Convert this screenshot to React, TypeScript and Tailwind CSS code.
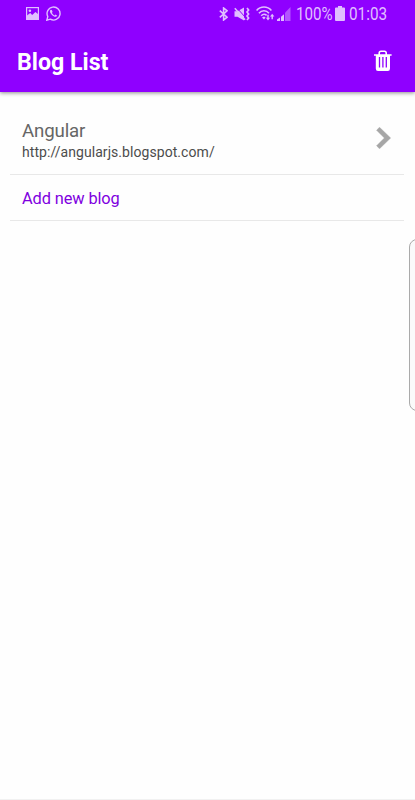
import { ReactNode } from "react";

type Blog = { title: string; url: string };

const blogs: Blog[] = [
  { title: "Angular", url: "http://angularjs.blogspot.com/" },
];

export default function App() {
  return (
    <div className="relative flex h-[800px] w-full flex-col overflow-hidden border-b border-[#f1f1f1] bg-[#fefefe] font-[Roboto,sans-serif]">
      <header className="h-[92px] shrink-0 bg-[#8f00ff] shadow-[0_1px_4px_rgba(0,0,0,0.45)]">
        <StatusBar />
        <div className="flex h-[66px] items-center justify-between pt-[3px] pr-[22px] pl-[17px]">
          <h1 className="pt-0.5 text-[23.2px] leading-7 font-bold text-white">
            Blog List
          </h1>
          <button aria-label="Delete">
            <TrashIcon />
          </button>
        </div>
      </header>
      <ul className="mt-[14px] mr-[11px] ml-[10px]">
        {blogs.map((blog) => (
          <Row key={blog.url}>
            <BlogPreview blog={blog} />
          </Row>
        ))}
        <Row>
          <button className="block h-[45px] pt-[3px] text-[16.4px] tracking-[-0.12px] text-[#7f00e0]">
            Add new blog
          </button>
        </Row>
      </ul>
      <div className="absolute top-[239px] left-[409px] h-[172px] w-5 rounded-lg border border-[#aaaaaa] bg-[#fafafa]" />
    </div>
  );
}

function Row({ children }: { children: ReactNode }) {
  return <li className="border-b border-[#e8e8e8] pl-3">{children}</li>;
}

function BlogPreview({ blog }: { blog: Blog }) {
  return (
    <div className="flex h-[68px] justify-between pr-3">
      <div className="pt-[13px]">
        <h2 className="text-[18.7px] leading-6 tracking-[-0.15px] text-[#666666]">
          {blog.title}
        </h2>
        <p className="-mt-px text-[14px] leading-5 tracking-[0.06px] text-[#4c4c4c]">
          {blog.url}
        </p>
      </div>
      <svg className="mt-[21px]" width="16" height="22" viewBox="0 0 16 22">
        <path
          d="M3.5 0.3 14.6 11 3.5 21.7 0.6 18.8 8.4 11 0.6 3.2Z"
          fill="#a6a6a6"
          stroke="#a6a6a6"
          strokeWidth="0.5"
          strokeLinejoin="round"
        />
      </svg>
    </div>
  );
}

function StatusBar() {
  return (
    <div className="flex h-[26px] items-center pt-px pl-[26px] text-[17.6px] text-[#e0bfff]">
      {/* picture */}
      <svg width="13" height="13" viewBox="0 0 13 13" fill="none">
        <rect x="0.6" y="0.6" width="11.8" height="11.8" stroke="currentColor" strokeWidth="1.2" />
        <path d="M1 8.5 4.2 6 6.2 8 9.4 5 12 7V12H1Z" fill="currentColor" />
        <circle cx="3.9" cy="3.8" r="1.3" fill="currentColor" />
      </svg>
      {/* whatsapp */}
      <svg className="ml-[7px]" width="15" height="15" viewBox="0 0 15 15" fill="none">
        <path
          d="M0.8 14.2 1.8 10.6A6.5 6.5 0 1 1 4.3 13.2Z"
          stroke="currentColor"
          strokeWidth="1.4"
        />
        <path
          d="M4.8 3.8C3.1 5 4.2 7.2 6 9S10 11.6 11.2 9.8L9.5 8.5 8.5 9.4C7.5 9 6.3 7.8 5.9 6.8L6.6 5.9 5.8 3.9Z"
          fill="currentColor"
        />
      </svg>
      {/* bluetooth */}
      <svg className="ml-[158px]" width="9" height="14" viewBox="0 0 9 14" fill="none">
        <path
          d="M0.8 3.7 8 10.2 4.6 13V1L8 3.8 0.8 10.3"
          stroke="currentColor"
          strokeWidth="1.6"
        />
      </svg>
      {/* sound off, vibrating */}
      <svg className="ml-[6px]" width="16" height="14" viewBox="0 0 16 14" fill="none">
        <path d="M0.5 4.3H3.5L10 0.5V13.5L3.5 9.7H0.5Z" fill="currentColor" />
        <path d="M2.6 0.6 11.5 10.5" stroke="#8f00ff" strokeWidth="1" />
        <path d="M0.8 1.3 11 12.7" stroke="currentColor" strokeWidth="1.6" />
        <path
          d="M13 1 14.6 3 13 5 14.6 7 13 9 14.6 11 13 13"
          stroke="currentColor"
          strokeWidth="1.7"
        />
      </svg>
      {/* wifi */}
      <svg className="ml-[6px]" width="19" height="15" viewBox="0 0 19 15" fill="none">
        <path
          d="M0.6 4.5C4.6-0.1 11.4-0.1 15.4 4.5M2.9 7.2C5.8 4 10.2 4 13 7.2M5.2 9.7C7 7.9 9 7.9 10.6 9.4"
          stroke="currentColor"
          strokeWidth="1.6"
        />
        <path d="M6 11.4 8 10.6 9.6 11.4 8 13.6Z" fill="currentColor" />
        <path
          d="M9.9 11.7H14.1L12 14.6ZM14 10.6 16.2 7.7 18.4 10.6Z"
          fill="currentColor"
        />
        <path d="M12 8.7V12M16.2 10V13.3" stroke="currentColor" strokeWidth="1.4" />
      </svg>
      {/* signal */}
      <svg className="ml-[2px]" width="14" height="14" viewBox="0 0 14 14" fill="currentColor">
        <path d="M0 14V12.5L3 10.5V14ZM4 14V9.8L7 7.2V14Z" />
        <path d="M8 14V5.8L13.5 0V14Z" opacity="0.45" />
      </svg>
      <span className="ml-[5px] w-[37px] origin-left scale-x-[0.86] pt-px whitespace-nowrap">
        100%
      </span>
      {/* battery */}
      <svg className="ml-[2px]" width="10" height="15" viewBox="0 0 10 15" fill="currentColor">
        <path d="M3 0H7V1.5H9Q10 1.5 10 2.5V14Q10 15 9 15H1Q0 15 0 14V2.5Q0 1.5 1 1.5H3Z" />
      </svg>
      <span className="ml-[4px] origin-left scale-x-[0.87] pt-px">01:03</span>
    </div>
  );
}

function TrashIcon() {
  return (
    <svg className="block" width="20" height="22" viewBox="0 0 20 22" fill="none">
      <path
        d="M6.2 5V3Q6.2 1.2 8 1.2H11.4Q13.2 1.2 13.2 3V5"
        stroke="white"
        strokeWidth="1.6"
      />
      <path
        d="M1 4.2H18.6V5.7H17V18.5Q17 21 14.8 21H5Q2.8 21 2.8 18.5V5.7H1Z"
        fill="white"
      />
      <path d="M6.5 7V17.5M9.9 7V17.5M13.3 7V17.5" stroke="#8f00ff" strokeWidth="1.3" />
    </svg>
  );
}
